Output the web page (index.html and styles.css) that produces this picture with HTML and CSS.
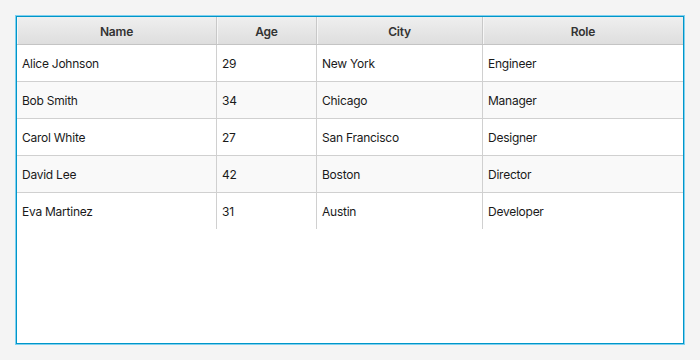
FILE: index.html
```html
<!DOCTYPE html>
<html>
<head>
<meta charset="utf-8">
<link rel="stylesheet" href="styles.css">
</head>
<body>
<div class="table">
  <div class="head">
    <div class="hc">Name</div>
    <div class="hc">Age</div>
    <div class="hc">City</div>
    <div class="hc">Role</div>
  </div>
  <div class="row">
    <div class="c">Alice Johnson</div><div class="c">29</div><div class="c">New York</div><div class="c">Engineer</div>
  </div>
  <div class="row alt">
    <div class="c">Bob Smith</div><div class="c">34</div><div class="c">Chicago</div><div class="c">Manager</div>
  </div>
  <div class="row">
    <div class="c">Carol White</div><div class="c">27</div><div class="c">San Francisco</div><div class="c">Designer</div>
  </div>
  <div class="row alt">
    <div class="c">David Lee</div><div class="c">42</div><div class="c">Boston</div><div class="c">Director</div>
  </div>
  <div class="row last">
    <div class="c">Eva Martinez</div><div class="c">31</div><div class="c">Austin</div><div class="c">Developer</div>
  </div>
</div>
</body>
</html>
```
FILE: styles.css
```css
html, body {
  margin: 0;
  padding: 0;
  background: #f4f4f4;
}
body {
  padding: 15px;
  font-family: Inter, "Noto Sans", sans-serif;
  font-size: 12px;
  color: #1a1a1a;
}
.table {
  box-sizing: border-box;
  margin: 1px;
  width: 668px;
  height: 328px;
  border: 1px solid #0096c9;
  box-shadow: 0 0 0 1px #7fd0ef;
  background: #ffffff;
}
.head, .row {
  display: grid;
  grid-template-columns: 200px 100px 166px 1fr;
}
.head {
  height: 27px;
  background: linear-gradient(to bottom, #efefef, #dedede);
  border-bottom: 1px solid #c4c4c4;
}
.hc {
  display: flex;
  align-items: center;
  justify-content: center;
  padding-top: 1px;
  font-weight: 600;
  color: #333333;
  letter-spacing: -0.2px;
  border-right: 1px solid #c8c8c8;
  box-shadow: inset 1px 0 0 #f6f6f6;
}
.hc:last-child { border-right: none; }
.row {
  height: 36px;
  border-bottom: 1px solid #d0d0d0;
  background: #ffffff;
}
.row.alt { background: #f9f9f9; }
.row.last { border-bottom: none; }
.c {
  display: flex;
  align-items: center;
  padding-left: 5px;
  letter-spacing: -0.25px;
  border-right: 1px solid #d0d0d0;
}
.c:last-child { border-right: none; }
```
